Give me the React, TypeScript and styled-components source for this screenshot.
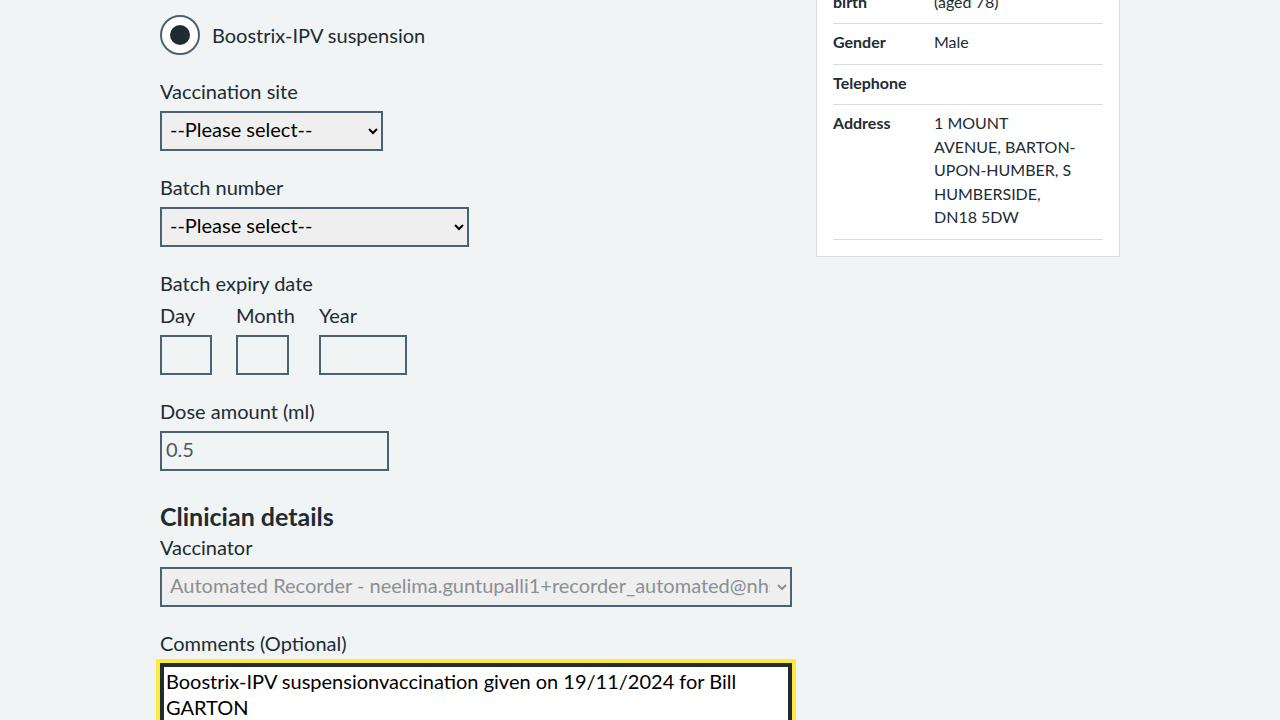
import React from "react";
import styled, { createGlobalStyle } from "styled-components";

const Global = createGlobalStyle`
  html, body { margin: 0; padding: 0; background: #f0f4f5; }
  body { font-family: Lato, "Noto Sans", sans-serif; color: #212b32; overflow: hidden; }
  * { box-sizing: border-box; }
`;

const Page = styled.div`
  width: 960px;
  margin: 0 auto;
  display: grid;
  grid-template-columns: 632px 304px;
  column-gap: 24px;
  align-items: start;
`;

const FormColumn = styled.div`
  padding-top: 15px;
  display: flex;
  flex-direction: column;
`;

const Group = styled.div`
  margin-bottom: 24px;
  display: flex;
  flex-direction: column;
  align-items: flex-start;
`;

const RadioRow = styled.label`
  display: flex;
  align-items: center;
  gap: 12px;
  font-size: 20px;
  line-height: 24px;
`;

const RadioCircle = styled.span`
  width: 40px;
  height: 40px;
  border: 2px solid #4c6272;
  border-radius: 50%;
  background: #fff;
  display: flex;
  align-items: center;
  justify-content: center;
  &::after {
    content: "";
    width: 20px;
    height: 20px;
    border-radius: 50%;
    background: #212b32;
  }
`;

const Label = styled.label`
  font-size: 20px;
  line-height: 24px;
  margin-bottom: 8px;
`;

const Select = styled.select<{ $w: number; $disabled?: boolean }>`
  width: ${(p) => p.$w}px;
  height: 40px;
  border: 2px solid #4c6272;
  border-radius: 0;
  background: #efefef;
  font-family: Lato, "Noto Sans", sans-serif;
  font-size: 20px;
  color: ${(p) => (p.$disabled ? "#8a8f93" : "#000")};
  padding: 0 4px 4px 4px;
  opacity: 1;
`;

const DateRow = styled.div`
  display: flex;
`;

const DateItem = styled.div`
  display: flex;
  flex-direction: column;
  align-items: flex-start;
  margin-right: 24px;
`;

const TextInput = styled.input<{ $w: number }>`
  width: ${(p) => p.$w}px;
  height: 40px;
  border: 2px solid #4c6272;
  border-radius: 0;
  background: transparent;
  font-family: Lato, "Noto Sans", sans-serif;
  font-size: 20px;
  color: #4f575d;
  padding: 0 4px 4px;
  outline: none;
`;

const Heading = styled.h2`
  margin: 0 0 3px;
  padding-top: 5px;
  font-size: 25px;
  line-height: 32px;
  font-weight: 700;
`;

const TextArea = styled.textarea`
  width: 632px;
  height: 90px;
  border: 2px solid #212b32;
  box-shadow: inset 0 0 0 2px #212b32;
  outline: 4px solid #ffeb3b;
  outline-offset: 0;
  border-radius: 0;
  background: #fff;
  font-family: Lato, "Noto Sans", sans-serif;
  font-size: 20px;
  line-height: 26px;
  color: #000;
  padding: 3px 4px;
  resize: none;
`;

const Card = styled.div`
  margin-top: -57px;
  background: #fff;
  border: 1px solid #d8dde0;
  padding: 16px;
`;

const Row = styled.div`
  display: grid;
  grid-template-columns: 101px 150px;
  padding: 6px 0 10px;
  border-bottom: 1px solid #d8dde0;
  font-size: 16px;
  line-height: 23.5px;
`;

const Key = styled.div`
  font-weight: 700;
  padding-right: 24px;
`;

const Value = styled.div``;

export default function App() {
  return (
    <>
      <Global />
      <Page>
        <FormColumn>
          <Group>
            <RadioRow>
              <RadioCircle />
              Boostrix-IPV suspension
            </RadioRow>
          </Group>
          <Group>
            <Label>Vaccination site</Label>
            <Select $w={223} defaultValue="">
              <option value="">--Please select--</option>
            </Select>
          </Group>
          <Group>
            <Label>Batch number</Label>
            <Select $w={309} defaultValue="">
              <option value="">--Please select--</option>
            </Select>
          </Group>
          <Group>
            <Label>Batch expiry date</Label>
            <DateRow>
              <DateItem>
                <Label>Day</Label>
                <TextInput $w={52} />
              </DateItem>
              <DateItem>
                <Label>Month</Label>
                <TextInput $w={53} />
              </DateItem>
              <DateItem>
                <Label>Year</Label>
                <TextInput $w={88} />
              </DateItem>
            </DateRow>
          </Group>
          <Group>
            <Label>Dose amount (ml)</Label>
            <TextInput $w={229} defaultValue="0.5" />
          </Group>
          <Heading>Clinician details</Heading>
          <Group>
            <Label>Vaccinator</Label>
            <Select $w={632} $disabled disabled defaultValue="a">
              <option value="a">Automated Recorder - neelima.guntupalli1+recorder_automated@nhs.net</option>
            </Select>
          </Group>
          <Group>
            <Label>Comments (Optional)</Label>
            <TextArea defaultValue="Boostrix-IPV suspensionvaccination given on 19/11/2024 for Bill GARTON" />
          </Group>
        </FormColumn>
        <Card>
          <Row>
            <Key>Date of birth</Key>
            <Value>
              6 April 1946
              <br />
              (aged 78)
            </Value>
          </Row>
          <Row>
            <Key>Gender</Key>
            <Value>Male</Value>
          </Row>
          <Row>
            <Key>Telephone</Key>
            <Value></Value>
          </Row>
          <Row>
            <Key>Address</Key>
            <Value>
              1 MOUNT
              <br />
              AVENUE, BARTON-
              <br />
              UPON-HUMBER, S
              <br />
              HUMBERSIDE,
              <br />
              DN18 5DW
            </Value>
          </Row>
        </Card>
      </Page>
    </>
  );
}
